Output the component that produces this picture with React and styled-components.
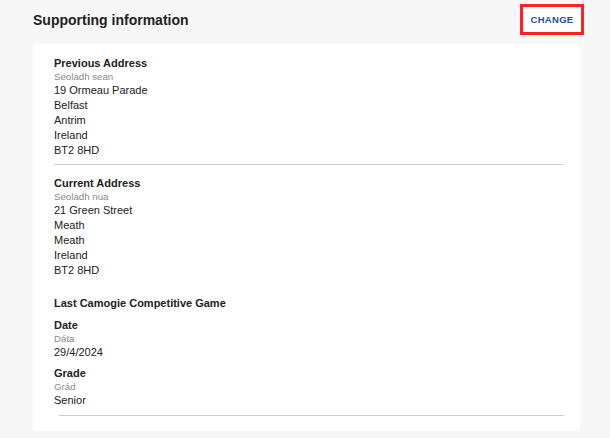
import styled, { createGlobalStyle } from "styled-components";

const GlobalStyle = createGlobalStyle`
    body {
        margin: 0;
        background: #f7f7f7;
        font-family: "Liberation Sans", Arial, sans-serif;
        color: #222;
    }
`;

const Page = styled.div`
    width: 610px;
    height: 438px;
    box-sizing: border-box;
    padding: 4px 26px 0 33px;
    overflow: hidden;
`;

const Header = styled.div`
    display: flex;
    justify-content: space-between;
    align-items: center;
`;

const Title = styled.h2`
    margin: 0;
    font-size: 14px;
    font-weight: bold;
    color: #222;
    padding-top: 1px;
`;

const ChangeButton = styled.button`
    margin: 0;
    height: 31px;
    width: 64px;
    box-sizing: border-box;
    border: 3px solid #ff2020;
    background: #fff;
    padding: 0;
    font-family: "Liberation Sans", Arial, sans-serif;
    font-size: 9.5px;
    font-weight: bold;
    letter-spacing: 0.3px;
    color: #1f4fa3;
    cursor: pointer;
`;

const Card = styled.div`
    margin-top: 9px;
    width: 547px;
    box-sizing: border-box;
    background: #fff;
    border-radius: 4px;
    padding: 13px 16px 15px 21px;
`;

const Section = styled.div`
    display: flex;
    flex-direction: column;
    padding-bottom: ${(p) => p.$gap || 0}px;
`;

const Heading = styled.div`
    font-size: 11px;
    font-weight: bold;
    line-height: 13px;
    margin-top: ${(p) => p.$top || 0}px;
`;

const Sub = styled.div`
    font-size: 9.7px;
    line-height: 13px;
    color: #8a8a8a;
`;

const Line = styled.div`
    font-size: 11px;
    line-height: 15px;
`;

const Divider = styled.hr`
    border: none;
    border-top: 1px solid #cfcfcf;
    margin: 0 0 0 ${(p) => p.$indent || 0}px;
`;

const addresses = [
    {
        title: "Previous Address",
        sub: "Seoladh sean",
        lines: ["19 Ormeau Parade", "Belfast", "Antrim", "Ireland", "BT2 8HD"],
    },
    {
        title: "Current Address",
        sub: "Seoladh nua",
        lines: ["21 Green Street", "Meath", "Meath", "Ireland", "BT2 8HD"],
    },
];

export default function App() {
    return (
        <Page>
            <GlobalStyle />
            <Header>
                <Title>Supporting information</Title>
                <ChangeButton>CHANGE</ChangeButton>
            </Header>
            <Card>
                <Section $gap={6}>
                    <Heading>{addresses[0].title}</Heading>
                    <Sub>{addresses[0].sub}</Sub>
                    {addresses[0].lines.map((l, i) => (
                        <Line key={i}>{l}</Line>
                    ))}
                </Section>
                <Divider />
                <Section>
                    <Heading $top={12}>{addresses[1].title}</Heading>
                    <Sub>{addresses[1].sub}</Sub>
                    {addresses[1].lines.map((l, i) => (
                        <Line key={i}>{l}</Line>
                    ))}
                </Section>
                <Section $gap={7}>
                    <Heading $top={19}>Last Camogie Competitive Game</Heading>
                    <Heading $top={9}>Date</Heading>
                    <Sub>Dáta</Sub>
                    <Line>29/4/2024</Line>
                    <Heading $top={7}>Grade</Heading>
                    <Sub>Grád</Sub>
                    <Line>Senior</Line>
                </Section>
                <Divider $indent={5} />
            </Card>
        </Page>
    );
}
